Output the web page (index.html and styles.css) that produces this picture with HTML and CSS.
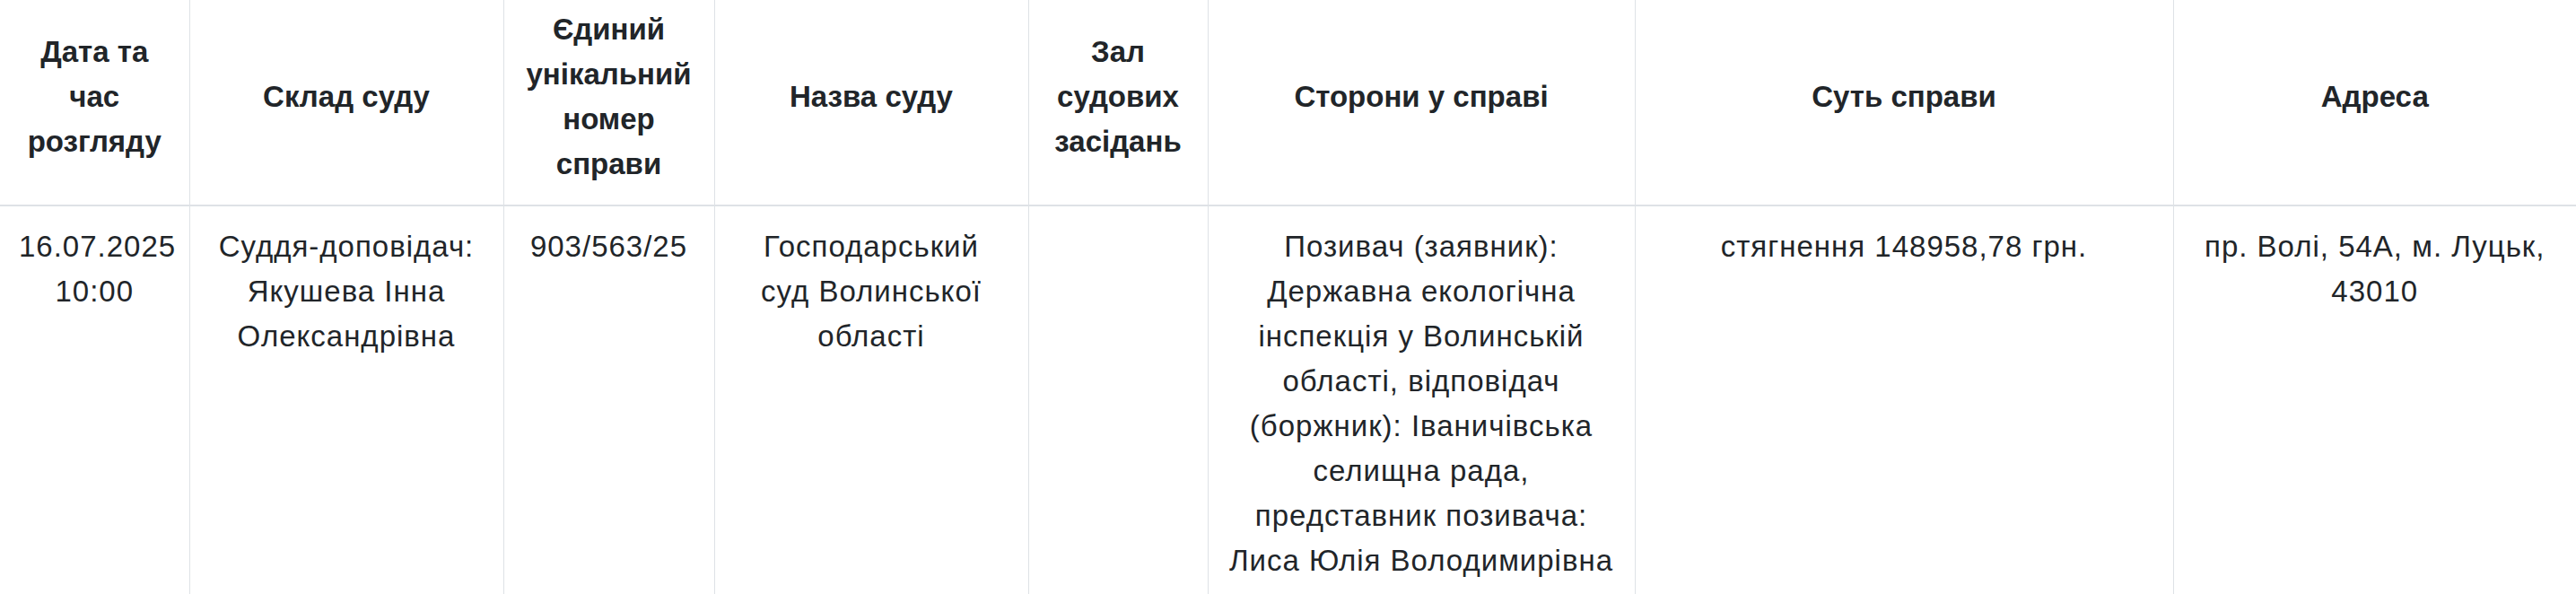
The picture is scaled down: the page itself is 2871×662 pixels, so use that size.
FILE: index.html
```html
<!DOCTYPE html>
<html lang="uk">
<head>
<meta charset="utf-8">
<title>Розклад засідань</title>
<link rel="stylesheet" href="styles.css">
</head>
<body>
<table class="schedule">
  <colgroup>
    <col class="c-date">
    <col class="c-judge">
    <col class="c-num">
    <col class="c-court">
    <col class="c-hall">
    <col class="c-parties">
    <col class="c-subject">
    <col class="c-addr">
  </colgroup>
  <thead>
    <tr>
      <th>Дата та час розгляду</th>
      <th>Склад суду</th>
      <th>Єдиний унікальний номер справи</th>
      <th>Назва суду</th>
      <th>Зал судових засідань</th>
      <th>Сторони у справі</th>
      <th>Суть справи</th>
      <th>Адреса</th>
    </tr>
  </thead>
  <tbody>
    <tr>
      <td>16.07.2025 10:00</td>
      <td>Суддя-доповідач: Якушева Інна Олександрівна</td>
      <td>903/563/25</td>
      <td class="court">Господарський суд Волинської області</td>
      <td></td>
      <td>Позивач (заявник): Державна екологічна інспекція у Волинській області, відповідач (боржник): Іваничівська селищна рада, представник позивача: Лиса Юлія Володимирівна</td>
      <td>стягнення 148958,78 грн.</td>
      <td>пр. Волі, 54А, м. Луцьк, 43010</td>
    </tr>
  </tbody>
</table>
</body>
</html>
```

FILE: styles.css
```css
html, body {
  margin: 0;
  padding: 0;
  background: #fff;
}
body {
  font-family: "Liberation Sans", Arial, Helvetica, sans-serif;
  font-size: 33px;
  line-height: 50px;
  color: #212529;
  overflow: hidden;
}
.schedule {
  width: 2871px;
  table-layout: fixed;
  border-collapse: collapse;
  margin-top: -12px;
}
.c-date { width: 211px; }
.c-judge { width: 350px; }
.c-num { width: 235px; }
.c-court { width: 350px; }
.c-hall { width: 200px; }
.c-parties { width: 476px; }
.c-subject { width: 600px; }
.c-addr { width: 449px; }

.schedule th,
.schedule td {
  border: 1px solid #dee2e6;
  padding: 20px 21px;
  text-align: center;
}
.schedule th {
  font-weight: bold;
  vertical-align: middle;
  border-top: none;
  border-bottom-width: 2px;
}
.schedule td {
  vertical-align: top;
  letter-spacing: 1px;
}
.schedule td.court {
  padding-left: 28px;
  padding-right: 28px;
}
.schedule th:first-child,
.schedule td:first-child {
  border-left: none;
}
.schedule th:last-child,
.schedule td:last-child {
  border-right: none;
}
```
